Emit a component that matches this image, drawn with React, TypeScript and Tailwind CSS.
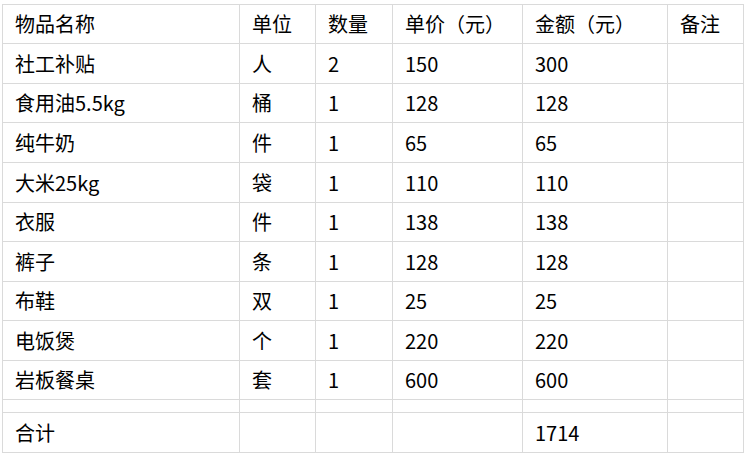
const cols = ['w-[237px]', 'w-[76px]', 'w-[77px]', 'w-[130px]', 'w-[145px]', 'w-[76px]'];

const rows: { h: string; cells: string[] }[] = [
  { h: 'h-[39px]', cells: ['物品名称', '单位', '数量', '单价（元）', '金额（元）', '备注'] },
  { h: 'h-[40px]', cells: ['社工补贴', '人', '2', '150', '300', ''] },
  { h: 'h-[39px]', cells: ['食用油5.5kg', '桶', '1', '128', '128', ''] },
  { h: 'h-[40px]', cells: ['纯牛奶', '件', '1', '65', '65', ''] },
  { h: 'h-[40px]', cells: ['大米25kg', '袋', '1', '110', '110', ''] },
  { h: 'h-[39px]', cells: ['衣服', '件', '1', '138', '138', ''] },
  { h: 'h-[40px]', cells: ['裤子', '条', '1', '128', '128', ''] },
  { h: 'h-[39px]', cells: ['布鞋', '双', '1', '25', '25', ''] },
  { h: 'h-[40px]', cells: ['电饭煲', '个', '1', '220', '220', ''] },
  { h: 'h-[39px]', cells: ['岩板餐桌', '套', '1', '600', '600', ''] },
  { h: 'h-[13px]', cells: ['', '', '', '', '', ''] },
  { h: 'h-[40px]', cells: ['合计', '', '', '', '1714', ''] },
];

export default function App() {
  return (
    <div
      className="w-[748px] h-[460px] bg-white pt-[4px] pl-[2px] text-[20px] text-black"
      style={{ fontFamily: '"Noto Sans CJK SC", "Noto Sans", sans-serif' }}
    >
      <div className="inline-flex flex-col border-l border-t border-[#dadada]">
        {rows.map((r, i) => (
          <div key={i} className={`flex ${r.h}`}>
            {r.cells.map((c, j) => (
              <div
                key={j}
                className={`${cols[j]} flex items-center pl-[12px] border-r border-b border-[#dadada] leading-none whitespace-nowrap`}
              >
                {c}
              </div>
            ))}
          </div>
        ))}
      </div>
    </div>
  );
}
